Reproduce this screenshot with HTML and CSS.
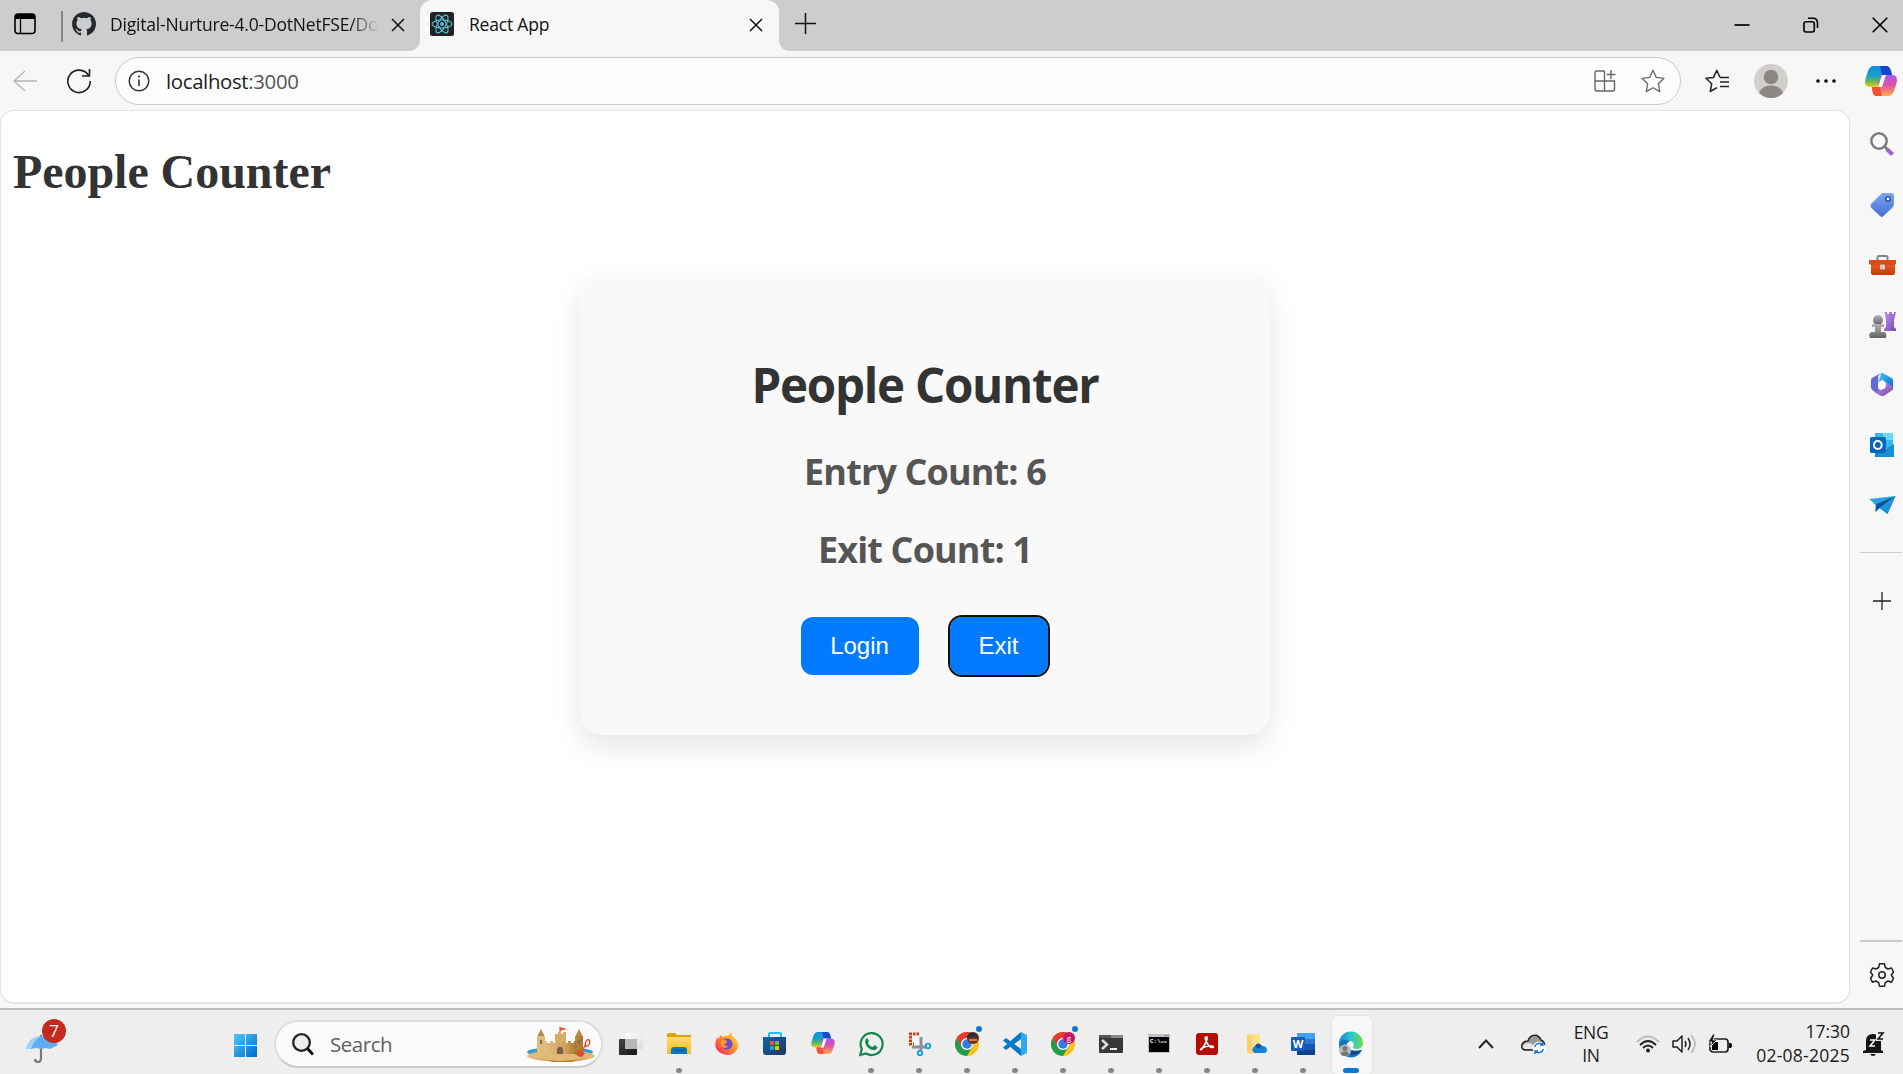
FILE: index.html
```html
<!DOCTYPE html>
<html lang="en">
<head>
<meta charset="utf-8">
<title>React App</title>
<link rel="stylesheet" href="styles.css">
</head>
<body>
<svg class="defs" width="0" height="0" aria-hidden="true">
  <defs>
    <linearGradient id="blue" x1="0" y1="0" x2="1" y2="1"><stop offset="0" stop-color="#4cc8fb"/><stop offset="1" stop-color="#0069c9"/></linearGradient>
    <linearGradient id="tag" x1="0" y1="0" x2="0" y2="1"><stop offset="0" stop-color="#7aa6f4"/><stop offset="1" stop-color="#466fd2"/></linearGradient>
    <linearGradient id="purple" x1="0" y1="0" x2="1" y2="1"><stop offset="0" stop-color="#c590f2"/><stop offset="1" stop-color="#754cab"/></linearGradient>
    <linearGradient id="grey" x1="0" y1="0" x2="0" y2="1"><stop offset="0" stop-color="#b5b5b5"/><stop offset="1" stop-color="#626262"/></linearGradient>
    <linearGradient id="orange" x1="0" y1="0" x2="0" y2="1"><stop offset="0" stop-color="#f0682e"/><stop offset="1" stop-color="#c8380b"/></linearGradient>
    <linearGradient id="copA" x1="0" y1="0" x2="0" y2="1"><stop offset="0" stop-color="#168be8"/><stop offset=".45" stop-color="#14a3c4"/><stop offset=".7" stop-color="#6db456"/><stop offset="1" stop-color="#ffd60a"/></linearGradient>
    <linearGradient id="copB" x1="0" y1="0" x2="0" y2="1"><stop offset="0" stop-color="#a855ee"/><stop offset=".5" stop-color="#e4549b"/><stop offset="1" stop-color="#ffac54"/></linearGradient>
    <linearGradient id="edgeA" x1="0" y1="0" x2="1" y2="0"><stop offset="0" stop-color="#1685d1"/><stop offset=".5" stop-color="#2cc5d4"/><stop offset="1" stop-color="#6be046"/></linearGradient>
    <linearGradient id="folder" x1="0" y1="0" x2="0" y2="1"><stop offset="0" stop-color="#ffdd66"/><stop offset="1" stop-color="#f7bd24"/></linearGradient>
    <linearGradient id="store" x1="0" y1="0" x2="1" y2="1"><stop offset="0" stop-color="#0c66ad"/><stop offset="1" stop-color="#24345c"/></linearGradient>
    <linearGradient id="sand" x1="0" y1="0" x2="1" y2="0"><stop offset="0" stop-color="#e3bf82"/><stop offset=".65" stop-color="#cda058"/><stop offset="1" stop-color="#a8772d"/></linearGradient>
    <linearGradient id="fox" x1="1" y1="0" x2="0" y2="1"><stop offset="0" stop-color="#fff04a"/><stop offset=".45" stop-color="#ff9422"/><stop offset="1" stop-color="#ed176a"/></linearGradient>
    <linearGradient id="dark" x1="0" y1="0" x2="1" y2="1"><stop offset="0" stop-color="#444"/><stop offset="1" stop-color="#161616"/></linearGradient>
    <linearGradient id="glass" x1="0" y1="0" x2="1" y2="1"><stop offset="0" stop-color="#fff"/><stop offset="1" stop-color="#dcdcdc"/></linearGradient>
    <symbol id="copilot" viewBox="0 0 32 30">
      <path d="M9 0H21C24 0 25 2 26 5L27 9H20L18 22H8L9 21H5C1 21-1 18 .5 13L3 5C4 2 6 0 9 0Z" fill="url(#copA)"/>
      <path d="M15 0H21C24 0 25 2 26 5L27 9H17Z" fill="#1648cf"/>
      <path d="M23 30H12C9 30 8 28 7.500 25L7 21H13L15 9H27C31 9 33 12 31.500 17L29 25C28 28 26 30 23 30Z" fill="url(#copB)"/>
      <path d="M7 21H15L17 30H12C9 30 8 28 7.500 25Z" fill="#f35232"/>
      <path d="M17 9H21L17 21H13Z" fill="#f8f8f8"/>
    </symbol>
    <symbol id="chrome" viewBox="0 0 24 24">
      <circle cx="12" cy="12" r="12" fill="#fcc31e"/>
      <path d="M12 12V6H22.400A12 12 0 0 0 1.600 6L6.800 15Z" fill="#e33b2e"/>
      <path d="M12 12L6.800 15 1.600 6A12 12 0 0 0 12 24L17.200 15Z" fill="#219b4d"/>
      <circle cx="12" cy="12" r="6" fill="#fff"/><circle cx="12" cy="12" r="4.700" fill="#2f7de6"/>
    </symbol>
    <symbol id="close" viewBox="0 0 14 14"><path d="M1 1L13 13M13 1L1 13" fill="none" stroke="#111" stroke-width="1.500"/></symbol>
  </defs>
</svg>
<div class="browser">
  <header class="tabs">
    <svg class="tab-actions" viewBox="0 0 22 22"><rect x="1" y="1" width="20" height="19.500" rx="3" fill="none" stroke="#000" stroke-width="1.600"/><path d="M1 6V4Q1 1 4 1H18Q21 1 21 4V6Z"/><path d="M6.500 6V20" stroke="#000" stroke-width="1.300"/></svg>
    <span class="divider"></span>
    <svg class="favicon" viewBox="0 0 16 16"><path fill="#24292f" d="M8 0a8 8 0 0 0-2.530 15.590c.4.070.55-.17.55-.38v-1.490c-2.010.37-2.530-.49-2.690-.94-.09-.23-.48-.94-.82-1.130-.28-.15-.68-.52-.01-.53.63-.01 1.080.58 1.230.82.72 1.210 1.870.87 2.330.66.07-.52.28-.87.510-1.070-1.780-.2-3.640-.89-3.640-3.950 0-.87.31-1.590.82-2.150-.08-.2-.36-1.020.08-2.120 0 0 .67-.21 2.200.82a7.400 7.400 0 0 1 4 0c1.530-1.040 2.200-.82 2.200-.82.44 1.100.16 1.920.08 2.120.51.56.82 1.270.82 2.150 0 3.070-1.870 3.750-3.650 3.950.29.25.54.73.54 1.480v2.200c0 .21.150.46.55.38A8 8 0 0 0 8 0Z"/></svg>
    <span class="tab-title faded">Digital-Nurture-4.0-DotNetFSE/Do</span>
    <svg class="x"><use href="#close"/></svg>
    <div class="active-tab">
      <svg class="favicon" viewBox="0 0 24 24"><rect width="24" height="24" rx="2.500" fill="#222"/><g fill="none" stroke="#58c4dc" stroke-width="1.100"><ellipse cx="12" cy="12" rx="10" ry="4"/><ellipse cx="12" cy="12" rx="10" ry="4" transform="rotate(60 12 12)"/><ellipse cx="12" cy="12" rx="10" ry="4" transform="rotate(120 12 12)"/></g><circle cx="12" cy="12" r="1.900" fill="#58c4dc"/></svg>
      <span class="tab-title">React App</span>
      <svg class="x"><use href="#close"/></svg>
    </div>
    <svg class="new-tab" viewBox="0 0 21 21"><path d="M10.500 0V21M0 10.500H21" stroke="#111" stroke-width="1.500"/></svg>
    <div class="window-controls">
      <svg viewBox="0 0 16 16"><path d="M.5 8H15.500" stroke="#000" stroke-width="1.700"/></svg>
      <svg viewBox="0 0 16 16"><g fill="none" stroke="#000" stroke-width="1.600"><rect x="1" y="4.700" width="10.300" height="10.300" rx="2"/><path d="M5 1.200H10Q14.500 1.200 14.500 6V11"/></g></svg>
      <svg viewBox="0 0 16 16"><path d="M.7.700L15.300 15.300M15.300.700L.7 15.300" stroke="#000" stroke-width="1.600"/></svg>
    </div>
  </header>
  <div class="toolbar">
    <svg class="back" viewBox="0 0 24 22"><path d="M12 1L1 11 12 21M1 11H24" fill="none" stroke="#b5b5b5" stroke-width="1.400"/></svg>
    <svg class="reload" viewBox="0 0 24 24"><path d="M21.500 6.400A11.200 11.200 0 1 0 23.200 12M22.500 0V7H15" fill="none" stroke="#222" stroke-width="1.600"/></svg>
    <div class="address">
      <svg class="info" viewBox="0 0 22 22"><circle cx="11" cy="11" r="9.800" fill="none" stroke="#333" stroke-width="1.500"/><path d="M11 9.500V16" stroke="#333" stroke-width="1.600"/><circle cx="11" cy="6.500" r="1.100" fill="#333"/></svg>
      <span class="url">localhost<span>:3000</span></span>
      <svg class="apps" viewBox="0 0 22 22"><path d="M10.500 1H3Q1 1 1 3V19Q1 21 3 21H18.500Q20.500 21 20.500 19V11H1M10.500 1V21M17 0V9M12.800 4.500H21.500" fill="none" stroke="#666" stroke-width="1.400"/></svg>
      <svg class="star" viewBox="0 0 24 24"><path d="M12 1.200L15.300 8.400 23 9.300 17.300 14.700 18.800 22.600 12 18.700 5.200 22.600 6.700 14.700 1 9.300 8.700 8.400Z" fill="none" stroke="#666" stroke-width="1.300" stroke-linejoin="round"/></svg>
    </div>
    <svg class="favorites" viewBox="0 0 24 24"><path d="M15 8.500L11.800 1.200 8.600 8.400 1 9.300 6.700 14.700 5.200 22.500 12 18.700M15 8.500H24M15 13H24M15 17.500H24" fill="none" stroke="#222" stroke-width="1.500" stroke-linejoin="round"/></svg>
    <svg class="avatar" viewBox="0 0 34 34"><defs><clipPath id="face"><circle cx="17" cy="17" r="17"/></clipPath></defs><g clip-path="url(#face)"><rect width="34" height="34" fill="#d1cfcb"/><circle cx="17" cy="13" r="7.300" fill="#8c8784"/><ellipse cx="17" cy="32" rx="12.500" ry="10.500" fill="#8c8784"/></g></svg>
    <svg class="more" viewBox="0 0 20 4"><circle cx="2" cy="2" r="1.800"/><circle cx="10" cy="2" r="1.800"/><circle cx="18" cy="2" r="1.800"/></svg>
    <svg class="copilot"><use href="#copilot"/></svg>
  </div>
  <div class="workspace">
    <main class="page">
      <h1 class="page-title">People Counter</h1>
      <section class="card">
        <h2 class="card-title">People Counter</h2>
        <h3 class="count entry">Entry Count: 6</h3>
        <h3 class="count exit">Exit Count: 1</h3>
        <div class="actions"><button class="btn login">Login</button><button class="btn leave">Exit</button></div>
      </section>
    </main>
    <aside class="sidebar">
      <svg viewBox="0 0 24 24"><path d="M14.500 14.500L18 18" stroke="#777" stroke-width="2.500"/><circle cx="9" cy="9" r="7.700" fill="#fafafa" stroke="#7c7c7c" stroke-width="2.500"/><path d="M18 15.500L24 21 21 24 15.500 18.500Z" fill="#9869cc"/></svg>
      <svg viewBox="0 0 24 24"><path d="M12 0H21Q24 0 24 3V11Q24 13 22 15L14 22.500Q12 25 10 23L1 14.500Q0 13 1 11Z" fill="url(#tag)"/><circle cx="18" cy="6" r="2.200" fill="#fff" stroke="#2f468c" stroke-width="1.500"/></svg>
      <svg class="wide" viewBox="0 0 27 24"><path d="M8.500 8V4Q8.500 3 10 3H17Q18.500 3 18.500 4V8" fill="none" stroke="#888" stroke-width="2"/><rect x="2" y="8" width="24" height="14" rx="2" fill="url(#orange)"/><path d="M0 7H27V11L24 12.500H3L0 11Z" fill="#dc4c1c"/><rect x="11" y="11.500" width="5" height="5" rx="1" fill="#ccc"/></svg>
      <svg class="wide tall" viewBox="0 0 27 28"><path d="M15.500 1H18V3H20V1H23V3H25V1H27L25 9V16L27 18V20H15V18L17 16V9Z" fill="url(#purple)"/><circle cx="9" cy="9" r="5" fill="url(#grey)"/><path d="M3 13H15V16H12V21H16Q18 23 17 27H1Q-1 23 2 21H6V16H3Z" fill="url(#grey)"/></svg>
      <svg viewBox="0 0 24 26"><path d="M11 0H13L23 6Q24 7 24 9V16L17 11 12 7 8 12Z" fill="url(#blue)"/><path d="M11 0L8 3V17L12 20 5 21 1 18Q0 17 0 14V8Q0 6 2 5Z" fill="#606bd4"/><path d="M4 21L14 17 17 10 24 15V18L14 25H11Z" fill="url(#purple)"/><circle cx="12" cy="13" r="4.300" fill="#fafafa"/></svg>
      <svg viewBox="0 0 24 24"><path d="M5 0H23V15H5Z" fill="#35b8f1"/><path d="M13 0H23V7H13Z" fill="#68d9fb"/><path d="M5 11L14 17 24 11V24H5Z" fill="#168dd8"/><rect y="4" width="16" height="16" rx="1.500" fill="#0767bd"/><circle cx="7.800" cy="12" r="3.900" fill="none" stroke="#fff" stroke-width="2"/></svg>
      <svg class="wide" viewBox="0 0 26 24"><path d="M0 6L26 3 18 21 10 15 6 19 6 12Z" fill="#27a5e0"/><path d="M26 3L7 11 6 19 10 15Z" fill="#075394"/><path d="M26 3L10 15 18 21Z" fill="#1c92d8"/></svg>
      <span class="side-line first"></span>
      <svg class="add" viewBox="0 0 18 18"><path d="M9 0V18M0 9H18" stroke="#222" stroke-width="1.300"/></svg>
      <span class="side-line second"></span>
      <svg class="gear" viewBox="0 0 24 24"><path d="M9.500 .8H14.500L15.300 4.500 18 6 21.500 5 23.500 9 21.300 12 23.500 15.500 21.500 19.200 18 18 15.300 19.700 14.500 23.200H9.500L8.700 19.700 6 18 2.500 19.200 .5 15.500 2.700 12 .5 9 2.500 5 6 6 8.700 4.500Z" fill="none" stroke="#222" stroke-width="1.500" stroke-linejoin="round"/><circle cx="12" cy="12" r="3.200" fill="none" stroke="#222" stroke-width="1.500"/></svg>
    </aside>
  </div>
  <footer class="taskbar">
    <div class="weather"><svg viewBox="0 0 34 30"><path d="M15 1V24Q15 28 12 28Q9 28 9 25" fill="none" stroke="#777" stroke-width="2.200"/><path d="M0 15Q3 3 15 2Q28 3 32 11L28 13 24 15 20 14 15 15 10 14 5 15Z" fill="#60aef2"/><path d="M0 15Q3 3 15 2Q7 7 5 15Z" fill="#9ed2fa"/></svg><span class="badge">7</span></div>
    <svg class="start" viewBox="0 0 23 23"><path d="M0 0H11V11H0ZM12 0H23V11H12ZM0 12H11V23H0ZM12 12H23V23H12Z" fill="url(#blue)"/></svg>
    <div class="search">
      <svg class="lens" viewBox="0 0 22 23"><circle cx="9.500" cy="9.500" r="8.300" fill="#eee" stroke="#222" stroke-width="2.300"/><path d="M15.500 15.500L21 21.500" stroke="#111" stroke-width="2.800"/></svg>
      <span class="search-text">Search</span>
      <svg class="castle" viewBox="0 0 70 36"><ellipse cx="34" cy="26" rx="33" ry="5" fill="#2e9dce"/><ellipse cx="35" cy="30" rx="34" ry="5.500" fill="#e1b878"/><path d="M9 32Q33 38 62 32L46 36H27Z" fill="#ba7f35"/><path d="M34 1V9" stroke="#666"/><path d="M34 1L41 3 34 5Z" fill="#f05336"/><path d="M11 11L15 3 19 11ZM49 11L53 3 57 11Z" fill="#b98747"/><path d="M11 10H19V29H11ZM49 10H57V29H49Z" fill="url(#sand)"/><path d="M29 8H32V6H35V8H37V6H40V17H29Z" fill="#d7ad68"/><path d="M18 15H21V17H24V15H27V17H30V15H33V17H36V15H39V17H42V15H45V17H48V15H51V28H18Z" fill="url(#sand)"/><path d="M31 28V23Q34 18 37 23V28Z" fill="#705f51"/><path d="M14 14H16V18H14ZM52 14H54V18H52Z" fill="#8b6750"/><path d="M54 29L60 18" stroke="#f05336" stroke-width="1.500"/><ellipse cx="61.500" cy="17" rx="2" ry="3.500" fill="none" stroke="#e5452b" stroke-width="1.300" transform="rotate(18 61.500 17)"/><path d="M52 24L59 27 56 31 51 30Z" fill="#e5452b"/></svg>
    </div>
    <nav class="apps-row">
      <span class="app"><svg viewBox="0 0 24 24"><rect y="7" width="18" height="16" rx="1" fill="url(#dark)"/><rect x="6" y="1" width="18" height="16" rx="1" fill="url(#glass)"/><path d="M6 7H18V17H6Z" fill="#b6b6b6"/></svg></span>
      <span class="app running"><svg viewBox="0 0 24 24"><path d="M0 3Q0 1 2 1H8L10 3H24V8H0Z" fill="#dda00c"/><path d="M0 5H24V22H0Z" fill="url(#folder)"/><path d="M4 22V18Q4 15 7 15H17Q20 15 20 18V22Z" fill="#0b77c6"/><path d="M7 18.500H17" stroke="#075291"/></svg></span>
      <span class="app"><svg viewBox="0 0 24 24"><path d="M5 3L8 5Q12 3 13 4Q14 2 16 0Q17 5 20 6Q26 13 21 19Q16 25 8 22Q-2 18 1 8L3 5 4 7Z" fill="url(#fox)"/><circle cx="12" cy="12" r="5.500" fill="#7448cf"/><path d="M6 8Q9 7 12 9Q12 12 9 12Q10 15 14 14Q8 19 6 12Z" fill="#ff9a23"/></svg></span>
      <span class="app"><svg viewBox="0 0 24 24"><path d="M6 6V2Q6 1 7 1H17Q18 1 18 2V6" fill="none" stroke="#20bdf1" stroke-width="2"/><path d="M0 5H23V20Q23 23 20 23H3Q0 23 0 20Z" fill="url(#store)"/><path d="M7 9H11V13H7Z" fill="#f35424"/><path d="M12 9H16V13H12Z" fill="#82bb14"/><path d="M7 14H11V18H7Z" fill="#09a5ee"/><path d="M12 14H16V18H12Z" fill="#ffba08"/></svg></span>
      <span class="app"><svg viewBox="0 0 24 24"><use href="#copilot" width="24" height="22"/></svg></span>
      <span class="app running"><svg viewBox="0 0 24 24"><path d="M1.200 23L2.800 17A11 11 0 1 1 7 21.500Z" fill="#eee" stroke="#16884f" stroke-width="2.200"/><path d="M8 6L10 9 9 11Q10 14 14 15L15.500 13 18.500 15Q18 18 15.500 18.300Q8 18 6 10Q6 7 8 6Z" fill="#16884f"/></svg></span>
      <span class="app running"><svg viewBox="0 0 24 24"><path d="M4 2H14V14H4Z" fill="#f7f7f7"/><path d="M12 2H3.500V12H7" fill="none" stroke="#d63c0b" stroke-width="3" stroke-dasharray="2.500 1"/><path d="M14 5V18M5 15H20" stroke="#899097" stroke-width="3"/><circle cx="21" cy="14" r="2.200" fill="#eee" stroke="#239fdc" stroke-width="2"/><circle cx="13" cy="21" r="2.200" fill="#eee" stroke="#239fdc" stroke-width="2"/></svg></span>
      <span class="app running notified"><svg viewBox="0 0 24 24"><use href="#chrome"/><circle cx="18" cy="6" r="6" fill="#69351f"/><path d="M12 5Q14-1 20 1L24 6Q18 3 12 6Z" fill="#222c3b"/><path d="M14 8H22" stroke="#d27c42" stroke-width="2"/></svg></span>
      <span class="app running"><svg viewBox="0 0 24 24"><path d="M18 0L24 3V21L18 24Z" fill="#32a8f1"/><path d="M18 0V7L3 18 0 15.500ZM0 8.500L3 6 18 17V24Z" fill="#087bc4"/></svg></span>
      <span class="app running notified"><svg viewBox="0 0 24 24"><use href="#chrome"/><circle cx="18" cy="6" r="6" fill="#c01862"/><text x="18" y="8.500" class="google-letter">g</text></svg></span>
      <span class="app running"><svg viewBox="0 0 24 24"><rect y="3" width="24" height="18" rx="1" fill="#383838"/><path d="M0 6V4Q0 3 1 3H12V6Z" fill="#555"/><path d="M12 3H23Q24 3 24 4V6H12Z" fill="#888"/><path d="M3 8L8 12.500 3 17" fill="none" stroke="#ddd" stroke-width="2.500"/><path d="M11 17H18" stroke="#fff" stroke-width="1.800"/></svg></span>
      <span class="app running"><svg viewBox="0 0 24 24"><rect x="1" y="2" width="22" height="19" fill="#bbc0c5"/><path d="M2 5H22V20H2Z" fill="#000"/><path d="M18 3.500H19M20.500 3.500H21.500" stroke="#43577b"/><text x="3" y="11" class="prompt">C:\</text><path d="M14 10H20" stroke="#eee"/></svg></span>
      <span class="app running"><svg viewBox="0 0 24 24"><rect x="1" y="1" width="22" height="22" rx="3" fill="#b50d00"/><path d="M11 5C14 4 11 11 7 17C4 20 5 14 17 14C21 15 16 18 12 11Q9 5 11 5Z" fill="none" stroke="#fff" stroke-width="1.600"/></svg></span>
      <span class="app running"><svg viewBox="0 0 24 24"><path d="M4 2H15Q17 2 17 4V20L8 22 4 20Z" fill="#ffe08c"/><path d="M4 2L9 5V22L4 20Z" fill="#ffd066"/><path d="M11 21Q7 17 12 14Q15 9 19 14Q24 14 24 18Q24 21 21 21Z" fill="#1684df"/><path d="M12 14Q15 9 19 14L15 17Z" fill="#0757a5"/></svg></span>
      <span class="app running"><svg viewBox="0 0 24 24"><path d="M6 1H24V23H6Z" fill="#1856af"/><path d="M6 1H24V7H6Z" fill="#43a0ed"/><path d="M6 7H24V12H6Z" fill="#2b78d4"/><path d="M6 18H24V23H6Z" fill="#103f91"/><rect y="5" width="14" height="14" rx="1" fill="#185abd"/><text x="7" y="15.800" class="word-letter">W</text></svg></span>
      <span class="app current"><svg viewBox="0 0 24 24"><path d="M0 12A12 12 0 0 1 24 11Q24 17 17 17Q12 16 15 13Q14 8 8 9Q3 10 0 12Z" fill="url(#edgeA)"/><path d="M0 12Q3 6 11 9Q5 12 9 17Q14 22 23 18A12 12 0 0 1 0 12Z" fill="#1474bb"/><path d="M9 12Q7 21 23 18Q16 26 9 21Z" fill="#124b8b"/><circle cx="6" cy="18.500" r="6" fill="#bbb"/><circle cx="6" cy="16.500" r="2.500" fill="#777"/><path d="M2 23Q2 19 6 19.500Q10 19 10 23Q6 25 2 23Z" fill="#777"/></svg></span>
    </nav>
    <svg class="chevron" viewBox="0 0 16 10"><path d="M1 9L8 1.500 15 9" fill="none" stroke="#222" stroke-width="1.900"/></svg>
    <svg class="cloud" viewBox="0 0 26 20"><path d="M5 16Q0 16 .8 11Q2 7 7 7Q9 0 16 1.500Q19 3 20 6Q25 8 23 14L20 16Z" fill="#999" stroke="#222" stroke-width="1.400"/><path d="M1.500 13Q3 8 9 9L18 15H4Z" fill="#e5e5e5"/><circle cx="18" cy="14" r="6.500" fill="#fff"/><path d="M13.500 13A5 5 0 0 1 22 11M22.500 15A5 5 0 0 1 14 17M22 8V11H19M14 20V17H17" fill="none" stroke="#1579c6" stroke-width="1.500"/></svg>
    <div class="lang">ENG<br>IN</div>
    <svg class="wifi" viewBox="0 0 24 18"><g fill="none" stroke="#222" stroke-width="1.800"><path d="M1 7Q12-4 23 7" stroke="#bbb"/><path d="M4 10Q12 2 20 10M7 13Q12 8 17 13"/></g><circle cx="12" cy="15.500" r="2" fill="#111"/></svg>
    <svg class="volume" viewBox="0 0 24 20"><g fill="none" stroke="#222" stroke-width="1.500"><path d="M1 7H5L10 2V18L5 13H1Z" stroke-linejoin="round"/><path d="M13 7Q15 10 13 13M16 4Q20 10 16 16"/><path d="M19 1Q27 10 19 19" stroke="#bbb"/></g></svg>
    <svg class="battery" viewBox="0 0 24 20"><rect x="2" y="5" width="18" height="13" rx="3" fill="none" stroke="#222" stroke-width="1.700"/><path d="M4 8H10V16H4Z"/><path d="M21 9H23Q25 11 23 14H21Z"/><path d="M5 0L0 8H4L2 13 9 6H5L7 0Z" fill="#111" stroke="#eee" stroke-width=".8"/></svg>
    <div class="clock">17:30<br><span>02-08-2025</span></div>
    <svg class="bell" viewBox="0 0 21 24"><path d="M3 18V9Q3 2 10 2Q18 2 18 10V18L20 19V21H0V19ZM7 22H13Q12 24 10 24Q8 24 7 22Z" fill="#151515"/><path d="M7 8H12L7 14H12" fill="none" stroke="#fff" stroke-width="1.500"/><path d="M13-1H22V9H13Z" fill="#eee"/><path d="M15 1H20L15 7H20" fill="none" stroke="#151515" stroke-width="1.600"/></svg>
  </footer>
</div>
</body>
</html>
```
FILE: styles.css
```css
* { box-sizing: border-box; }
body { margin: 0; width: 1903px; height: 1074px; overflow: hidden; font-family: "Open Sans", "Noto Sans", sans-serif; color: #1b1b1b; }
svg { display: block; flex: none; overflow: visible; }
.defs { position: absolute; }
.browser { height: 1074px; display: flex; flex-direction: column; background: #f7f7f7; }
.tabs { height: 51px; flex: none; display: flex; align-items: flex-start; background: #cdcdcd; }
.tab-actions { width: 22px; height: 22px; margin: 13px 25px 0 14px; }
.divider { width: 2px; height: 31px; margin: 11px 9px 0 0; background: #888; }
.favicon { width: 24px; height: 24px; margin-top: 12px; }
.tab-title { height: 30px; line-height: 30px; margin-top: 9px; font-size: 17.500px; letter-spacing: -.2px; white-space: nowrap; color: #111; }
.faded { width: 268px; margin-left: 14px; margin-right: 1px; letter-spacing: -.2px; mask-image: linear-gradient(90deg, #000 240px, transparent 268px); }
.x { width: 14px; height: 14px; margin-top: 18px; }
.faded + .x { margin-left: 12px; }
.active-tab { display: flex; align-items: flex-start; width: 359px; height: 51px; margin-left: 15px; padding-left: 10px; background: #f7f7f7; border-radius: 12px 12px 0 0; position: relative; }
.active-tab .tab-title { width: 267px; margin-left: 15px; margin-right: 13px; }
.active-tab::before, .active-tab::after { content: ""; position: absolute; bottom: 0; width: 10px; height: 10px; }
.active-tab::before { left: -10px; background: radial-gradient(circle at 0 0, #cdcdcd 9.500px, #f7f7f7 10px); }
.active-tab::after { right: -10px; background: radial-gradient(circle at 100% 0, #cdcdcd 9.500px, #f7f7f7 10px); }
.new-tab { width: 21px; height: 21px; margin: 13px 0 0 16px; }
.window-controls { display: flex; gap: 53px; margin: 17px 15px 0 auto; }
.window-controls svg { width: 16px; height: 16px; }
.toolbar { height: 59px; flex: none; display: flex; align-items: center; }
.back { width: 24px; height: 22px; margin-left: 13px; }
.reload { width: 24px; height: 24px; margin-left: 30px; }
.address { width: 1566px; height: 48px; margin-left: 24px; display: flex; align-items: center; background: #fdfdfd; border: 1.500px solid #cacaca; border-radius: 24px; }
.info { width: 22px; height: 22px; margin-left: 12px; }
.url { margin-left: 16px; font-size: 20.400px; line-height: 32px; letter-spacing: -.35px; color: #1a1a1a; }
.url span { color: #555; }
.apps { width: 22px; height: 22px; margin-left: auto; }
.star { width: 24px; height: 24px; margin: 0 15px 0 25px; }
.favorites { width: 24px; height: 24px; margin-left: 24px; }
.avatar { width: 34px; height: 34px; margin-left: 25px; }
.more { width: 20px; height: 4px; margin-left: 28px; }
.copilot { width: 32px; height: 30px; margin-left: 29px; }
.workspace { display: flex; height: 898px; flex: none; }
.page { width: 1850px; height: 894px; flex: none; background: #fff; border: 1px solid #e4e4e4; border-bottom-width: 2px; border-radius: 14px; }
.page-title { margin: 33px 0 0 12px; height: 56px; font: bold 48px/56px "Liberation Serif", serif; letter-spacing: -.05px; color: #333; }
.card { width: 690px; height: 462px; margin: 73px auto 0; padding-top: 82px; background: #f9f9f9; border-radius: 22.500px; box-shadow: 0 12px 30px rgba(0, 0, 0, .1); text-align: center; }
.card-title { margin: 0; font-size: 47.500px; line-height: 60px; letter-spacing: -1.250px; color: #333; white-space: nowrap; }
.count { margin: 0; font-size: 36px; line-height: 44px; letter-spacing: -.87px; color: #555; }
.entry { margin-top: 35px; }
.exit { margin-top: 34px; }
.actions { display: flex; justify-content: center; gap: 31px; margin: 45px 2px 0 0; }
.btn { height: 58px; padding: 0; border: 0; border-radius: 12px; background: #007bff; color: #fff; font: 24px "Liberation Sans", sans-serif; }
.login { width: 118px; }
.leave { width: 98px; outline: 2.500px solid #101010; outline-offset: -.5px; box-shadow: 0 0 0 3px #fff; }
.sidebar { width: 53px; flex: none; display: flex; flex-direction: column; align-items: center; padding: 22px 0 0 11px; }
.sidebar > svg { width: 24px; height: 24px; margin-bottom: 36px; }
.sidebar > svg:first-child { margin-bottom: 37px; }
.sidebar > .wide { width: 27px; }
.sidebar > .tall { height: 28px; margin-top: -2px; margin-bottom: 34px; }
.side-line { width: 42px; height: 1px; background: #ccc; margin-left: -3px; }
.side-line.first { margin-top: -1px; }
.sidebar > .add { width: 18px; height: 18px; margin: 39px 0 0; }
.side-line.second { height: 2px; margin-top: 330px; }
.sidebar > .gear { margin: 21px 0 0; }
.taskbar { height: 66px; flex: none; display: flex; align-items: center; padding-top: 4px; border-top: 2px solid #bdbdbd; background: #eee; }
.weather { width: 40px; height: 46px; margin: -5px 0 0 26px; position: relative; padding-top: 15px; }
.weather svg { width: 34px; height: 30px; }
.badge { position: absolute; left: 16px; top: 0; width: 24px; height: 24px; border-radius: 50%; background: #c42b1c; color: #fff; font-size: 17px; line-height: 24px; text-align: center; }
.start { width: 23px; height: 23px; margin-left: 168px; margin-top: 2px; }
.search { width: 329px; height: 48px; margin-left: 17px; display: flex; align-items: center; border: 2px solid #dedede; border-bottom-color: #ccc; border-radius: 24px; background: #fafafa; }
.lens { width: 22px; height: 23px; margin-left: 16px; }
.search-text { margin-left: 16px; font-size: 20.500px; color: #606060; letter-spacing: -.45px; }
.castle { width: 70px; height: 36px; margin: 0 5px 0 auto; }
.apps-row { display: flex; margin-left: 4px; }
.app { width: 48px; height: 60px; display: flex; align-items: center; justify-content: center; position: relative; }
.app svg { width: 24px; height: 24px; }
.running::after { content: ""; position: absolute; left: 21px; bottom: 1px; width: 6px; height: 5px; border-radius: 3px; background: #858585; }
.notified::before { content: ""; position: absolute; left: 33px; top: 12px; width: 6px; height: 6px; border-radius: 50%; background: #0878d4; }
.current::before { content: ""; position: absolute; left: 4px; top: 1px; width: 40px; height: 58px; border: 1px solid #e3e3e3; border-radius: 6px; background: #f7f7f7; }
.current svg { position: relative; }
.current::after { content: ""; position: absolute; left: 16px; bottom: 1px; width: 16px; height: 5px; border-radius: 3px; background: #0878d4; }
.google-letter { font: 8px "Open Sans", sans-serif; text-anchor: middle; fill: #fff; }
.prompt { font: bold 6px "Liberation Mono", monospace; fill: #fff; }
.word-letter { font: bold 11px "Open Sans", sans-serif; text-anchor: middle; fill: #fff; }
.chevron { width: 16px; height: 10px; margin-left: 103px; }
.cloud { width: 26px; height: 20px; margin-left: 27px; }
.lang { width: 60px; margin-left: 14px; text-align: center; font-size: 17.500px; line-height: 23px; letter-spacing: -.3px; }
.wifi { width: 24px; height: 18px; margin-left: 15px; }
.volume { width: 24px; height: 20px; margin-left: 12px; }
.battery { width: 24px; height: 20px; margin-left: 12px; }
.clock { width: 118px; text-align: right; font-size: 17.500px; line-height: 24px; letter-spacing: 0; margin-top: -3px; }
.clock span { letter-spacing: .25px; }
.bell { width: 21px; height: 24px; margin-left: 13px; }
```
